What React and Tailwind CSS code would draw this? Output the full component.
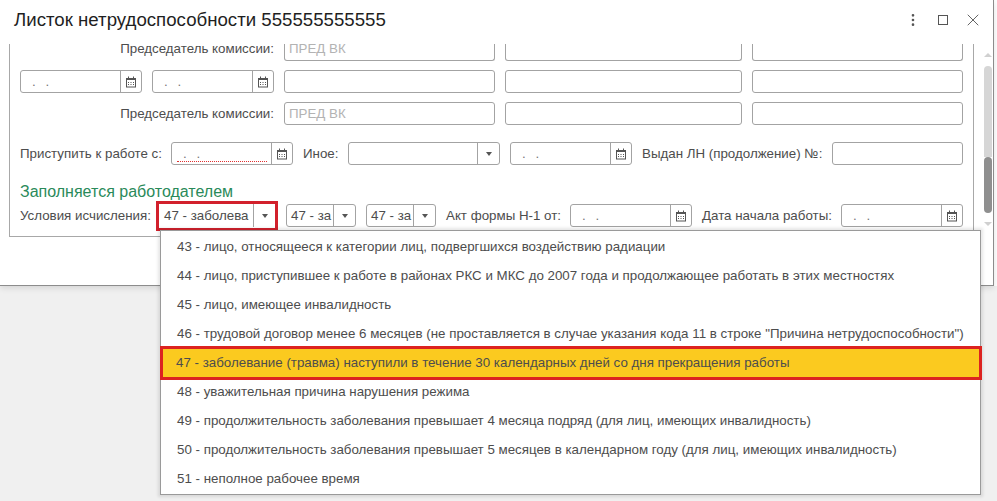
import React from "react";
import { MoreVertical, X } from "lucide-react";

const font = { fontFamily: '"Liberation Sans", Arial, sans-serif' };

const Calendar = () => (
  <svg width="12" height="12" viewBox="0 0 12 12" className="shrink-0">
    <rect x="1.5" y="2.5" width="9" height="8.5" fill="none" stroke="#555" />
    <rect x="1" y="2" width="10" height="2" fill="#555" />
    <rect x="3" y="0.5" width="1" height="2" fill="#555" />
    <rect x="8" y="0.5" width="1" height="2" fill="#555" />
    <path d="M3 6h1v1H3zM5.5 6h1v1h-1zM8 6h1v1H8zM3 8h1v1H3zM5.5 8h1v1h-1zM8 8h1v1H8z" fill="#555" />
  </svg>
);

const Box = ({ className = "", children }) => (
  <div className={`h-[23px] flex items-center shrink-0 bg-white border border-[#a3a3a3] rounded-[3px] ${className}`}>
    {children}
  </div>
);

const TextInput = ({ className = "", text }) => (
  <Box className={className}>
    {text && <span className="pl-[4px] text-[#b3b3b3]">{text}</span>}
  </Box>
);

// first row is scrolled under the header, so only its lower part shows
const CutInput = ({ className = "", text }) => (
  <div className={`h-[17px] shrink-0 bg-white border-x border-b border-[#a3a3a3] rounded-b-[3px] pl-[4px] leading-[10px] text-[#b3b3b3] ${className}`}>
    {text}
  </div>
);

const DateInput = ({ className = "w-[122px]", error = false }) => (
  <Box className={className}>
    <div className="flex-1 h-full relative pl-[11px] text-[#777] leading-[22px] tracking-[3px]">
      . .
      {error && <div className="absolute left-[5px] right-[4px] bottom-[2px] border-b border-dotted border-[#e03030]" />}
    </div>
    <div className="w-[21px] h-full border-l border-[#a3a3a3] flex items-center justify-center">
      <Calendar />
    </div>
  </Box>
);

const Caret = () => <div className="w-0 h-0 border-x-[3px] border-x-transparent border-t-[4px] border-t-[#555]" />;

const Combo = ({ className = "", text }) => (
  <Box className={className}>
    <div className="flex-1 pl-[4px] overflow-hidden whitespace-nowrap text-[#4d4d4d]">{text}</div>
    <div className="w-[22px] h-full border-l border-[#a3a3a3] flex items-center justify-center">
      <Caret />
    </div>
  </Box>
);

const Label = ({ className = "", children }) => (
  <span className={`shrink-0 text-[#4d4d4d] whitespace-nowrap ${className}`}>{children}</span>
);

const OPTIONS = [
  "43 - лицо, относящееся к категории лиц, подвергшихся воздействию радиации",
  "44 - лицо, приступившее к работе в районах РКС и МКС до 2007 года и продолжающее работать в этих местностях",
  "45 - лицо, имеющее инвалидность",
  '46 - трудовой договор менее 6 месяцев (не проставляется в случае указания кода 11 в строке "Причина нетрудоспособности")',
  "47 - заболевание (травма) наступили в течение 30 календарных дней со дня прекращения работы",
  "48 - уважительная причина нарушения режима",
  "49 - продолжительность заболевания превышает 4 месяца подряд (для лиц, имеющих инвалидность)",
  "50 - продолжительность заболевания превышает 5 месяцев в календарном году (для лиц, имеющих инвалидность)",
  "51 - неполное рабочее время",
];

const App = () => {
  return (
    <div className="w-[997px] h-[501px] bg-[#f0f0f0] relative overflow-hidden text-[13.33px]" style={font}>
      <div className="flex h-[286px] bg-white">
        {/* Window */}
        <div className="w-[994px] bg-white border-r border-b border-[#8c8c8c] shadow-[0_2px_6px_rgba(0,0,0,0.12)] flex flex-col">
          <div className="h-[44px] shrink-0 flex items-center pl-[14px] pr-[10px] pb-[4px]">
            <h1 className="flex-1 text-[18.67px] text-[#1f1f1f]">Листок нетрудоспособности 555555555555</h1>
            <MoreVertical size={16} strokeWidth={2} className="text-[#555] mr-[17px]" />
            <div className="w-[10px] h-[10px] border border-[#555] mr-[15px]" />
            <X size={20} strokeWidth={1} className="text-[#444]" />
          </div>

          <div className="flex-1 flex">
            {/* Form frame */}
            <div className="w-[965px] h-[193px] ml-[9px] border-l border-r border-b border-[#a8a8a8]">
              <div className="pl-[10px] flex gap-[10px] h-[17px]">
                <div className="w-[254px] flex justify-end leading-[10px]">
                  <Label>Председатель комиссии:</Label>
                </div>
                <CutInput className="w-[211px]" text="ПРЕД ВК" />
                <CutInput className="w-[237px]" />
                <CutInput className="w-[211px]" />
              </div>
              <div className="pl-[10px] flex gap-[10px] mt-[9px]">
                <DateInput />
                <DateInput />
                <TextInput className="w-[211px]" />
                <TextInput className="w-[237px]" />
                <TextInput className="w-[211px]" />
              </div>
              <div className="pl-[10px] flex gap-[10px] mt-[9px]">
                <div className="w-[254px] flex justify-end items-center h-[23px]">
                  <Label>Председатель комиссии:</Label>
                </div>
                <TextInput className="w-[211px]" text="ПРЕД ВК" />
                <TextInput className="w-[237px]" />
                <TextInput className="w-[211px]" />
              </div>
              <div className="pl-[10px] flex items-center mt-[17px]">
                <Label className="w-[151px]">Приступить к работе с:</Label>
                <DateInput error />
                <Label className="ml-[10px] w-[45px]">Иное:</Label>
                <Combo className="w-[152px]" />
                <DateInput className="w-[122px] ml-[10px]" />
                <Label className="ml-[10px] w-[190px]">Выдан ЛН (продолжение) №:</Label>
                <TextInput className="w-[131px]" />
              </div>
              <div className="pl-[10px] mt-[17px] text-base leading-[20px] text-[#2a8a5a]">Заполняется работодателем</div>
              <div className="pl-[10px] flex items-center mt-[2px]">
                <Label className="w-[136px]">Условия исчисления:</Label>
                <div className="border-[3px] border-[#d2202c] w-[122px] h-[30px] flex items-center -my-[4px] bg-white z-10">
                  <div className="flex-1 pl-[5px] text-[#4d4d4d] whitespace-nowrap overflow-hidden">47 - заболева</div>
                  <div className="w-[22px] h-[23px] border-l border-[#a3a3a3] flex items-center justify-center">
                    <Caret />
                  </div>
                </div>
                <Combo className="w-[70px] ml-[8px]" text="47 - за" />
                <Combo className="w-[70px] ml-[10px]" text="47 - за" />
                <Label className="ml-[10px] w-[124px]">Акт формы Н-1 от:</Label>
                <DateInput />
                <Label className="ml-[10px] w-[139px]">Дата начала работы:</Label>
                <DateInput />
              </div>
            </div>

            {/* Scrollbar */}
            <div className="w-[8px] ml-[10px] flex flex-col items-center">
              <div className="mt-[9px] w-0 h-0 border-x-[4px] border-x-transparent border-b-[4px] border-b-[#d0d0d0]" />
              <div className="mt-[9px] w-[8px] h-[91px] bg-[#d6d6d6] rounded-t-[4px]" />
              <div className="w-[8px] h-[56px] bg-[#8f8f8f] rounded-[4px]" />
              <div className="mt-[9px] w-0 h-0 border-x-[4px] border-x-transparent border-t-[4px] border-t-[#d0d0d0]" />
            </div>
          </div>
        </div>
      </div>

      {/* Dropdown list */}
      <div className="absolute left-[160px] top-[230px] w-[821px] h-[265px] bg-white border border-[#9a9a9a] shadow-[0_0_3px_2px_rgba(0,0,0,0.1)] py-[1px] z-20">
        {OPTIONS.map((opt) =>
          opt.startsWith("47") ? (
            <div
              key={opt}
              className="h-[34px] -mt-[2px] -mb-[3px] flex items-center pl-[13px] -ml-[1px] -mr-[2px] relative bg-[#fbca1f] border-[3px] border-[#dc2320] text-[#4d4d4d] whitespace-nowrap"
            >
              {opt}
            </div>
          ) : (
            <div key={opt} className="h-[29px] flex items-center pl-[16px] text-[#4d4d4d] whitespace-nowrap">
              {opt}
            </div>
          )
        )}
      </div>
    </div>
  );
};

export default App;
